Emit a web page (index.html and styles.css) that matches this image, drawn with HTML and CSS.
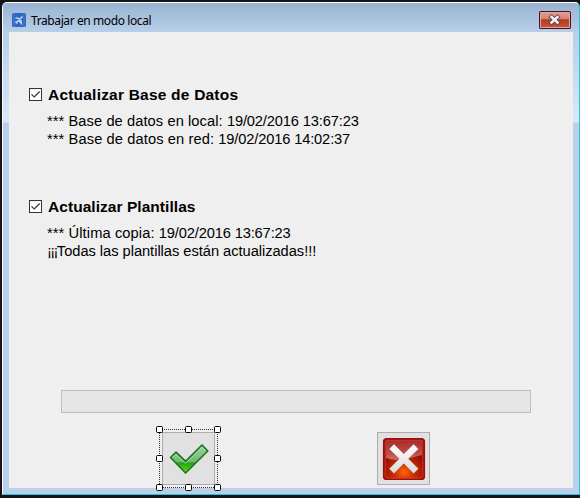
FILE: index.html
```html
<!DOCTYPE html>
<html lang="es">
<head>
<meta charset="utf-8">
<title>Trabajar en modo local</title>
<link rel="stylesheet" href="styles.css">
</head>
<body>
<div class="window">
  <header class="titlebar">
    <svg class="app-icon" width="14" height="14" viewBox="0 0 14 14"><rect width="14" height="14" rx="1.5" fill="#2c68c4"/><path d="M2 0V14M12 0V14" stroke="#4c7ed0" stroke-width="1"/><path d="M10.5 3.5L4.2 9.8M3.6 4.9L6.4 5.3L9 7.6L9.3 10.4L6.7 7.6M3.4 8.8L5.3 10.5" fill="none" stroke="#d0dff2" stroke-width="1.35"/></svg>
    <span class="title">Trabajar en modo local</span>
    <button class="close" aria-label="Cerrar"><svg width="32" height="18" viewBox="0 0 32 18"><path d="M12.5 6L18.5 11.5M18.5 6L12.5 11.5" stroke="#5c4650" stroke-width="4.4" stroke-linecap="square"/><path d="M12.5 6L18.5 11.5M18.5 6L12.5 11.5" stroke="#f4f4f4" stroke-width="2.5" stroke-linecap="square"/></svg></button>
  </header>
  <main class="client">
    <section class="group">
      <label class="option"><svg class="check" width="13" height="13" viewBox="0 0 13 13"><rect x=".5" y=".5" width="12" height="12" fill="#fff" stroke="#333"/><path d="M2.5 6.3L5.2 9L10.7 3.5" fill="none" stroke="#333" stroke-width="1.2"/></svg><span class="heading h-base">Actualizar Base de Datos</span></label>
      <p class="line l-local">*** Base de datos en local: <span class="date">19/02/2016 13:67:23</span></p>
      <p class="line l-red">*** Base de datos en red: <span class="date">19/02/2016 14:02:37</span></p>
    </section>
    <section class="group">
      <label class="option"><svg class="check" width="13" height="13" viewBox="0 0 13 13"><rect x=".5" y=".5" width="12" height="12" fill="#fff" stroke="#333"/><path d="M2.5 6.3L5.2 9L10.7 3.5" fill="none" stroke="#333" stroke-width="1.2"/></svg><span class="heading h-plant">Actualizar Plantillas</span></label>
      <p class="line l-copy">*** Última copia: <span class="date">19/02/2016 13:67:23</span></p>
      <p class="line l-all"><span class="marks">¡¡¡</span>Todas las plantillas están actualizadas!!!</p>
    </section>
    <div class="progress"></div>
    <div class="actions">
      <button class="action" aria-label="Aceptar">
        <svg width="51" height="52" viewBox="0 0 51 52"><defs><linearGradient id="green" x1="0" y1="0" x2="0" y2="1"><stop offset="0" stop-color="#9bd2a0"/><stop offset=".59" stop-color="#71bb73"/><stop offset=".64" stop-color="#279f17"/><stop offset="1" stop-color="#63e400"/></linearGradient></defs><path d="M7.5 24.5L13 19.2L22.6 28.4L39 12L44.8 18L22.6 40Z" fill="url(#green)" stroke="#217527" stroke-width="1.7" stroke-linejoin="round"/><path d="M9.5 24.3L13 21.2L22.6 30.4L39 14.2L42.5 18" fill="none" stroke="#b9e3bb" stroke-width=".8"/></svg>
        <svg class="selection" width="65" height="65" viewBox="0 0 65 65"><rect x="3.5" y="3.5" width="58" height="58" fill="none" stroke="#333" stroke-dasharray="1 1" shape-rendering="crispEdges"/><g fill="#fff" stroke="#000"><rect x=".5" y=".5" width="6" height="6" rx="1"/><rect x="29.5" y=".5" width="6" height="6" rx="1"/><rect x="58.5" y=".5" width="6" height="6" rx="1"/><rect x=".5" y="29.5" width="6" height="6" rx="1"/><rect x="58.5" y="29.5" width="6" height="6" rx="1"/><rect x=".5" y="58.5" width="6" height="6" rx="1"/><rect x="29.5" y="58.5" width="6" height="6" rx="1"/><rect x="58.5" y="58.5" width="6" height="6" rx="1"/></g></svg>
      </button>
      <button class="action" aria-label="Cancelar">
        <svg width="51" height="51" viewBox="0 0 51 51"><defs><radialGradient id="red" cx=".5" cy=".82" r=".55"><stop offset="0" stop-color="#ff6a00"/><stop offset=".4" stop-color="#d23000"/><stop offset="1" stop-color="#950a04"/></radialGradient><linearGradient id="gloss" x1="0" y1="0" x2="0" y2="1"><stop offset="0" stop-color="#d76a6a" stop-opacity=".35"/><stop offset="1" stop-color="#e09a96" stop-opacity=".65"/></linearGradient><linearGradient id="silver" x1="0" y1="0" x2="0" y2="1"><stop offset="0" stop-color="#fff"/><stop offset="1" stop-color="#d9d9d9"/></linearGradient></defs><rect x="5.6" y="5.6" width="40.8" height="40.8" rx="3" fill="url(#red)" stroke="#a00d10" stroke-width="1.4"/><rect x="7.2" y="7.2" width="37.6" height="37.6" rx="2" fill="none" stroke="#d0453c" stroke-width=".8"/><path d="M8 7.5H44V22Q34 25 25 26Q15 28 8 25Z" fill="url(#gloss)"/><path d="M11 16L16 11L25.8 20.8L35.6 11L40.6 16L30.6 25.8L40.6 35.8L35.6 40.8L25.8 30.8L16 40.8L11 35.8L21 25.8Z" fill="url(#silver)" stroke="#861c18" stroke-opacity=".4"/></svg>
      </button>
    </div>
  </main>
</div>
</body>
</html>
```
FILE: styles.css
```css
* { box-sizing: border-box; }
html, body { margin: 0; height: 100%; overflow: hidden; }
body { background: #171417; padding: 2px 0 3px 2px; font-family: "Liberation Sans", sans-serif; }
.window {
  height: 493px;
  display: flex;
  flex-direction: column;
  padding: 0 6px;
  border: 1px solid #25c2dd;
  border-top-color: #fff;
  border-left-color: #f4fafe;
  border-radius: 5px 5px 0 0;
  background: linear-gradient(#98b3d1 0, #b7cfe9 29px, #c6daf0 70px, #dce8f7 119px, #b9d0ea 120px);
}
.titlebar { height: 29px; flex: none; display: flex; align-items: center; padding: 4px 2px 0 3px; }
.app-icon { flex: none; margin-top: 1px; }
.title { flex: 1; margin-left: 5px; padding-top: 2px; font: 12px/16px "Noto Sans", sans-serif; color: #000; letter-spacing: -.4px; }
.close { width: 32px; height: 18px; padding: 0; border: 0; border-radius: 2px; box-shadow: inset 0 0 0 1px #4a1020, inset 0 0 0 2px #e0a7a0; background: linear-gradient(#e4a095 0, #d98072 45%, #b53922 48%, #c75b3e 100%); }
.close svg { display: block; }
.client { flex: 1; min-height: 0; margin-bottom: 6px; background: #efefef; padding-top: 54px; }
.group { height: 112px; padding-left: 20px; }
.option { display: flex; align-items: center; height: 18px; }
.check { flex: none; margin-top: -2px; }
.heading { margin-left: 6px; font-size: 15.5px; font-weight: bold; line-height: 18px; white-space: nowrap; }
.h-base { letter-spacing: .21px; }
.h-plant { letter-spacing: .05px; }
.line { margin: 0 0 0 18px; font-size: 14.67px; line-height: 18px; white-space: nowrap; }
.l-local { letter-spacing: .08px; }
.l-copy, .l-red { letter-spacing: .1px; }
.line .date { letter-spacing: -.14px; }
.l-all { letter-spacing: -.03px; }
.marks { letter-spacing: -1.6px; }
.option + .line { margin-top: 8px; }
.progress { width: 470px; height: 23px; margin: 80px 0 0 52px; border: 1px solid #bcbcbc; background: #e6e6e6; }
.actions { display: flex; gap: 162px; margin: 19px 0 0 153px; }
.action { position: relative; width: 53px; height: 53px; padding: 0; border: 1px solid #adadad; background: #e1e1e1; }
.action svg { display: block; }
.action .selection { position: absolute; left: -7px; top: -7px; overflow: visible; }
```
